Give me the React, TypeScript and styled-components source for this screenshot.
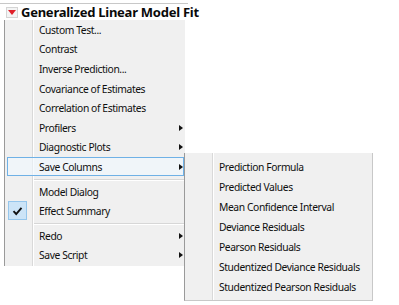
import React from "react";
import styled, { createGlobalStyle } from "styled-components";

const Global = createGlobalStyle`
  html, body { margin: 0; padding: 0; background: #ffffff; }
  body { font-family: "Noto Sans", "Open Sans", sans-serif; color: #111; }
  #root { width: 399px; height: 305px; overflow: hidden; }
`;

const Page = styled.div`
  position: relative;
  width: 399px;
  height: 305px;
  background: #ffffff;
  overflow: hidden;
`;

const Header = styled.div`
  display: flex;
  align-items: center;
  gap: 3px;
  height: 16px;
  margin-top: 3px;
  padding-left: 6px;
  width: 182px;
  border-top: 1px solid #c8c8c8;
  white-space: nowrap;
`;

const DisclosureBox = styled.span`
  display: inline-flex;
  align-items: center;
  justify-content: center;
  width: 10px;
  height: 9px;
  border: 1px solid #d4d4d4;
  background: #f4f4f4;
  flex: none;
`;

const Title = styled.span`
  font-family: "Noto Sans", sans-serif;
  font-weight: 700;
  font-size: 13px;
  line-height: 16px;
  color: #0a0a0a;
  letter-spacing: -0.25px;
`;

const Menu = styled.div<{ $width: number }>`
  position: relative;
  width: ${(p) => p.$width}px;
  background: #f0f0f0;
  border-left: 1px solid #9a9a9a;
  box-sizing: border-box;
  display: flex;
  flex-direction: column;
  &::before {
    content: "";
    position: absolute;
    top: 0;
    bottom: 0;
    left: 27px;
    width: 1px;
    background: #d9d9d9;
    box-shadow: 1px 0 0 #ffffff;
  }
`;

const MainMenu = styled(Menu)`
  margin-left: 4px;
  padding: 0 0 1px 0;
`;

const SubMenu = styled(Menu)`
  position: absolute;
  left: 184px;
  top: 153px;
  padding: 4px 0 3px 0;
  border-right: 1px solid #c8c8c8;
  border-bottom: 1px solid #c8c8c8;
`;

const Item = styled.div<{ $h: number; $active?: boolean }>`
  position: relative;
  display: flex;
  align-items: center;
  height: ${(p) => p.$h}px;
  padding-left: 34px;
  font-family: "Noto Sans", sans-serif;
  font-size: 10.3px;
  color: #0f0f0f;
  white-space: nowrap;
  letter-spacing: -0.4px;
  ${(p) =>
    p.$active
      ? `
    &::after {
      content: "";
      position: absolute;
      left: 2px; right: 1px; top: 0; bottom: 1px;
      border: 1px solid #6fb1e6;
      background: rgba(240, 248, 255, 0.6);
      z-index: 0;
    }
  `
      : ""}
`;

const Label = styled.span`
  position: relative;
  z-index: 1;
`;

const Arrow = styled.span`
  position: absolute;
  right: 2px;
  top: 50%;
  margin-top: -3px;
  width: 0;
  height: 0;
  border-top: 3px solid transparent;
  border-bottom: 3px solid transparent;
  border-left: 4px solid #111;
  z-index: 1;
`;

const CheckBox = styled.span`
  position: absolute;
  left: 3px;
  top: 0;
  width: 17px;
  height: 17px;
  background: #cce4f7;
  border: 1px solid #95c6ec;
  display: flex;
  align-items: center;
  justify-content: center;
  z-index: 1;
`;

const Separator = styled.div`
  height: 5px;
  display: flex;
  align-items: center;
  padding-left: 29px;
  &::after {
    content: "";
    flex: 1;
    height: 1px;
    background: #d7d7d7;
    box-shadow: 0 1px 0 #ffffff;
  }
`;

type Entry =
  | { kind: "item"; label: string; arrow?: boolean; active?: boolean; checked?: boolean }
  | { kind: "sep" };

const mainEntries: Entry[] = [
  { kind: "item", label: "Custom Test..." },
  { kind: "item", label: "Contrast" },
  { kind: "item", label: "Inverse Prediction..." },
  { kind: "item", label: "Covariance of Estimates" },
  { kind: "item", label: "Correlation of Estimates" },
  { kind: "item", label: "Profilers", arrow: true },
  { kind: "item", label: "Diagnostic Plots", arrow: true },
  { kind: "item", label: "Save Columns", arrow: true, active: true },
  { kind: "sep" },
  { kind: "item", label: "Model Dialog" },
  { kind: "item", label: "Effect Summary", checked: true },
  { kind: "sep" },
  { kind: "item", label: "Redo", arrow: true },
  { kind: "item", label: "Save Script", arrow: true },
];

const subEntries: string[] = [
  "Prediction Formula",
  "Predicted Values",
  "Mean Confidence Interval",
  "Deviance Residuals",
  "Pearson Residuals",
  "Studentized Deviance Residuals",
  "Studentized Pearson Residuals",
];

const Check = () => (
  <svg width="11" height="10" viewBox="0 0 11 10">
    <path d="M1.5 5.2 L4.2 8 L9.5 1.8" fill="none" stroke="#111" strokeWidth="1.9" />
  </svg>
);

const RedTriangle = () => (
  <svg width="8" height="5" viewBox="0 0 8 5">
    <path d="M0 0 H8 L4 5 Z" fill="#e0202a" />
  </svg>
);

export default function App() {
  return (
    <>
      <Global />
      <Page>
        <Header>
          <DisclosureBox>
            <RedTriangle />
          </DisclosureBox>
          <Title>Generalized Linear Model Fit</Title>
        </Header>
        <MainMenu $width={181}>
          {mainEntries.map((e, i) =>
            e.kind === "sep" ? (
              <Separator key={i} />
            ) : (
              <Item key={i} $h={19.6} $active={e.active}>
                {e.checked && (
                  <CheckBox>
                    <Check />
                  </CheckBox>
                )}
                <Label>{e.label}</Label>
                {e.arrow && <Arrow />}
              </Item>
            )
          )}
        </MainMenu>
        <SubMenu $width={189}>
          {subEntries.map((s) => (
            <Item key={s} $h={20}>
              <Label>{s}</Label>
            </Item>
          ))}
        </SubMenu>
      </Page>
    </>
  );
}
